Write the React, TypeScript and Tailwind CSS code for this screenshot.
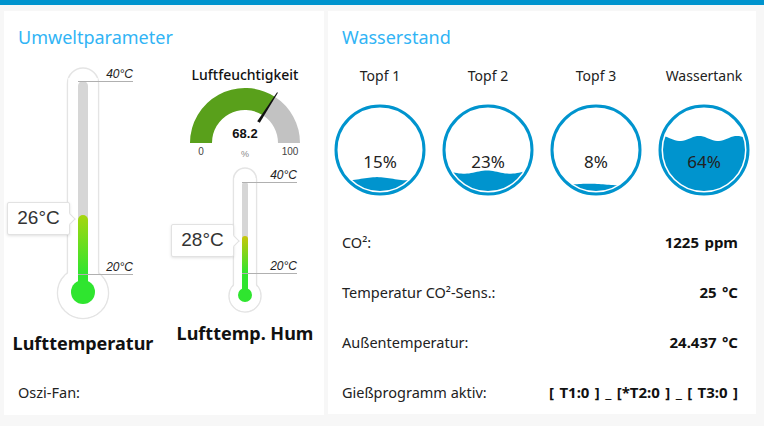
import React from 'react';

type ThermoProps = {
  width: number;
  height: number;
  cx: number;
  tubeTop: number;
  tubeW: number;
  bulbCy: number;
  bulbR: number;
  trackW: number;
  trackTop: number;
  tickBottom: number;
  tickX2: number;
  levelTop: number;
  innerR: number;
  topColor: string;
  id: string;
};

// thermometer drawing, tick labels kept as svg text
const Thermo = (p: ThermoProps) => {
  const tubeH = p.bulbCy - p.tubeTop;
  return (
    <svg width={p.width} height={p.height} className="block">
      <defs>
        <linearGradient id={p.id} x1="0" y1={p.levelTop} x2="0" y2={p.tickBottom} gradientUnits="userSpaceOnUse">
          <stop offset="0" stopColor={p.topColor} />
          <stop offset="1" stopColor="#2fe52f" />
        </linearGradient>
      </defs>
      {/* outer glass */}
      <circle cx={p.cx} cy={p.bulbCy} r={p.bulbR} fill="#fff" stroke="#e4e4e4" strokeWidth="1.5" />
      <rect x={p.cx - p.tubeW / 2} y={p.tubeTop} width={p.tubeW} height={tubeH} rx={p.tubeW / 2} fill="#fff" stroke="#e4e4e4" strokeWidth="1.5" />
      <circle cx={p.cx} cy={p.bulbCy} r={p.bulbR - 0.8} fill="#fff" />
      <rect x={p.cx - p.tubeW / 2 + 0.8} y={p.tubeTop + 10} width={p.tubeW - 1.6} height={tubeH} fill="#fff" />
      {/* track + level */}
      <rect x={p.cx - p.trackW / 2} y={p.trackTop} width={p.trackW} height={p.bulbCy - p.trackTop} rx={p.trackW / 2} fill="#d6d6d6" />
      <rect x={p.cx - p.trackW / 2} y={p.levelTop} width={p.trackW} height={p.bulbCy - p.levelTop} rx={p.trackW / 2} fill={`url(#${p.id})`} />
      <circle cx={p.cx} cy={p.bulbCy - 1} r={p.innerR} fill="#2fe52f" />
      {/* ticks */}
      <line x1={p.cx - p.trackW / 2} x2={p.tickX2} y1={p.trackTop + 0.5} y2={p.trackTop + 0.5} stroke="#b0b0b0" strokeWidth="1" />
      <line x1={p.cx - p.trackW / 2} x2={p.tickX2} y1={p.tickBottom + 0.5} y2={p.tickBottom + 0.5} stroke="#b0b0b0" strokeWidth="1" />
      <text x={p.tickX2} y={p.trackTop - 3} textAnchor="end" fontSize="12" fontStyle="italic" fill="#222" fontFamily="'Liberation Sans', Arial, sans-serif">
        40°C
      </text>
      <text x={p.tickX2} y={p.tickBottom - 3} textAnchor="end" fontSize="12" fontStyle="italic" fill="#222" fontFamily="'Liberation Sans', Arial, sans-serif">
        20°C
      </text>
    </svg>
  );
};

const Bubble = ({ value, className }: { value: string; className: string }) => (
  <div className={`absolute h-[33px] w-[63px] bg-white border border-[#e2e2e2] rounded-[2px] shadow-[0_1px_3px_rgba(0,0,0,0.12)] flex items-center justify-center ${className}`}>
    <span className="text-[19px] text-[#333] font-['Liberation_Sans',Arial,sans-serif]">{value}</span>
    <span className="absolute right-[-5px] top-[12px] w-[8px] h-[8px] bg-white border-t border-r border-[#e2e2e2] rotate-45" />
  </div>
);

const Gauge = () => (
  <svg width={158} height={75} className="block">
    <path d="M24 58 A55 55 0 0 1 108.8 11.7 L96.9 30.2 A33 33 0 0 0 46 58 Z" fill="#59a01b" />
    <path d="M108.8 11.7 A55 55 0 0 1 134 58 L112 58 A33 33 0 0 0 96.9 30.2 Z" fill="#c2c2c2" />
    <polygon points="91.2,36.2 93.8,37.8 111.9,7.7 111.1,7.3" fill="#111" />
    <text x="79" y="53" textAnchor="middle" fontSize="13" fontWeight="bold" fill="#111" fontFamily="'Liberation Sans', Arial, sans-serif">
      68.2
    </text>
    <text x="35" y="70" textAnchor="middle" fontSize="10" fill="#444" fontFamily="'Liberation Sans', Arial, sans-serif">
      0
    </text>
    <text x="124" y="70" textAnchor="middle" fontSize="10" fill="#444" fontFamily="'Liberation Sans', Arial, sans-serif">
      100
    </text>
    <text x="79" y="72" textAnchor="middle" fontSize="9" fill="#888" fontFamily="'Liberation Sans', Arial, sans-serif">
      %
    </text>
  </svg>
);

const wavePath = (level: number, phase: number, amp: number, wl: number) => {
  const y0 = 88 - level * 82;
  let d = '';
  for (let x = 0; x <= 94; x += 2) {
    const y = y0 - amp * Math.cos((2 * Math.PI * (x - phase)) / wl);
    d += `${x === 0 ? 'M' : 'L'}${x} ${y.toFixed(2)} `;
  }
  return d + 'L94 94 L0 94 Z';
};

type Tank = { name: string; level: number; phase: number; amp: number; wl: number };

const Liquid = ({ t, id }: { t: Tank; id: string }) => (
  <svg width={94} height={94} className="block">
    <defs>
      <clipPath id={id}>
        <circle cx="47" cy="47" r="41" />
      </clipPath>
    </defs>
    <circle cx="47" cy="47" r="44" fill="none" stroke="#0094ce" strokeWidth="3" />
    <path d={wavePath(t.level, t.phase, t.amp, t.wl)} fill="#0094ce" clipPath={`url(#${id})`} />
    <text x="47" y="65" textAnchor="middle" fontSize="17" fill="#222" fontFamily="'Noto Sans', sans-serif">
      {Math.round(t.level * 100)}%
    </text>
  </svg>
);

const tanks: Tank[] = [
  { name: 'Topf 1', level: 0.15, phase: 44, amp: 1.6, wl: 60 },
  { name: 'Topf 2', level: 0.23, phase: 46, amp: 1.6, wl: 46 },
  { name: 'Topf 3', level: 0.08, phase: 40, amp: 0.8, wl: 60 },
  { name: 'Wassertank', level: 0.64, phase: 42, amp: 2.6, wl: 38 },
];

const rows = [
  { label: 'CO²:', value: '1225 ppm' },
  { label: 'Temperatur CO²-Sens.:', value: '25 °C' },
  { label: 'Außentemperatur:', value: '24.437 °C' },
  { label: 'Gießprogramm aktiv:', value: '[ T1:0 ] _ [*T2:0 ] _ [ T3:0 ]' },
];

export default function App() {
  return (
    <div className="w-[764px] h-[426px] bg-[#f7f7f7] overflow-hidden font-['Noto_Sans',sans-serif] text-[#222]">
      <div className="h-[5px] bg-[#0094ce]" />

      <div className="flex gap-[4px] pl-[4px] pt-[6px]">
        {/* Umweltparameter */}
        <div className="w-[320px] h-[404px] bg-white flex flex-col">
          <h2 className="px-[14px] pt-[14px] text-[18px] leading-[24px] text-[#31b4f5]">Umweltparameter</h2>

          <div className="flex">
            <div className="w-[150px] flex flex-col">
              <div className="relative mt-[11px]">
                <Thermo
                  id="g1"
                  width={150}
                  height={262}
                  cx={79}
                  tubeTop={8}
                  tubeW={31}
                  bulbCy={233}
                  bulbR={25.5}
                  trackW={10}
                  trackTop={21}
                  tickBottom={214}
                  tickX2={129}
                  levelTop={155}
                  innerR={12}
                  topColor="#a6d60f"
                />
                <Bubble value="26°C" className="left-[3px] top-[142px]" />
              </div>
              <div className="mt-[9px] w-[158px] text-center text-[18px] leading-[24px] font-bold text-[#111]">Lufttemperatur</div>
            </div>

            <div className="w-[170px] pl-[12px] flex flex-col">
              <div className="mt-[16px] text-center text-[14px] leading-[20px] font-medium text-[#111]">Luftfeuchtigkeit</div>
              <Gauge />
              <div className="relative">
                <Thermo
                  id="g2"
                  width={158}
                  height={156}
                  cx={79}
                  tubeTop={8}
                  tubeW={23}
                  bulbCy={136}
                  bulbR={16}
                  trackW={6}
                  trackTop={22}
                  tickBottom={113}
                  tickX2={131}
                  levelTop={76}
                  innerR={7}
                  topColor="#c9c60a"
                />
                <Bubble value="28°C" className="left-[5px] top-[64px]" />
              </div>
              <div className="mt-[5px] text-center text-[18px] leading-[24px] font-bold text-[#111]">Lufttemp. Hum</div>
            </div>
          </div>

          <div className="mt-auto px-[14px] pb-[13px] text-[14.5px] leading-[20px]">Oszi-Fan:</div>
        </div>

        {/* Wasserstand */}
        <div className="w-[428px] h-[403px] bg-white flex flex-col">
          <h2 className="px-[14px] pt-[14px] text-[18px] leading-[24px] text-[#31b4f5]">Wasserstand</h2>

          <div className="mt-[17px] pl-[2px] grid grid-cols-[100px_100px_100px_100px] gap-x-[8px]">
            {tanks.map((t, i) => (
              <div key={t.name} className="flex flex-col items-center">
                <div className="text-[14px] leading-[20px]">{t.name}</div>
                <div className="mt-[17px]">
                  <Liquid t={t} id={`clip${i}`} />
                </div>
              </div>
            ))}
          </div>

          <div className="mt-[35px] pl-[14px] pr-[18px] flex flex-col gap-[30px] text-[14.5px] leading-[20px]">
            {rows.map((r) => (
              <div key={r.label} className="flex justify-between">
                <span>{r.label}</span>
                <span className="font-bold text-[15px] text-[#111] whitespace-pre [word-spacing:1.5px]">{r.value}</span>
              </div>
            ))}
          </div>
        </div>
      </div>
    </div>
  );
}
